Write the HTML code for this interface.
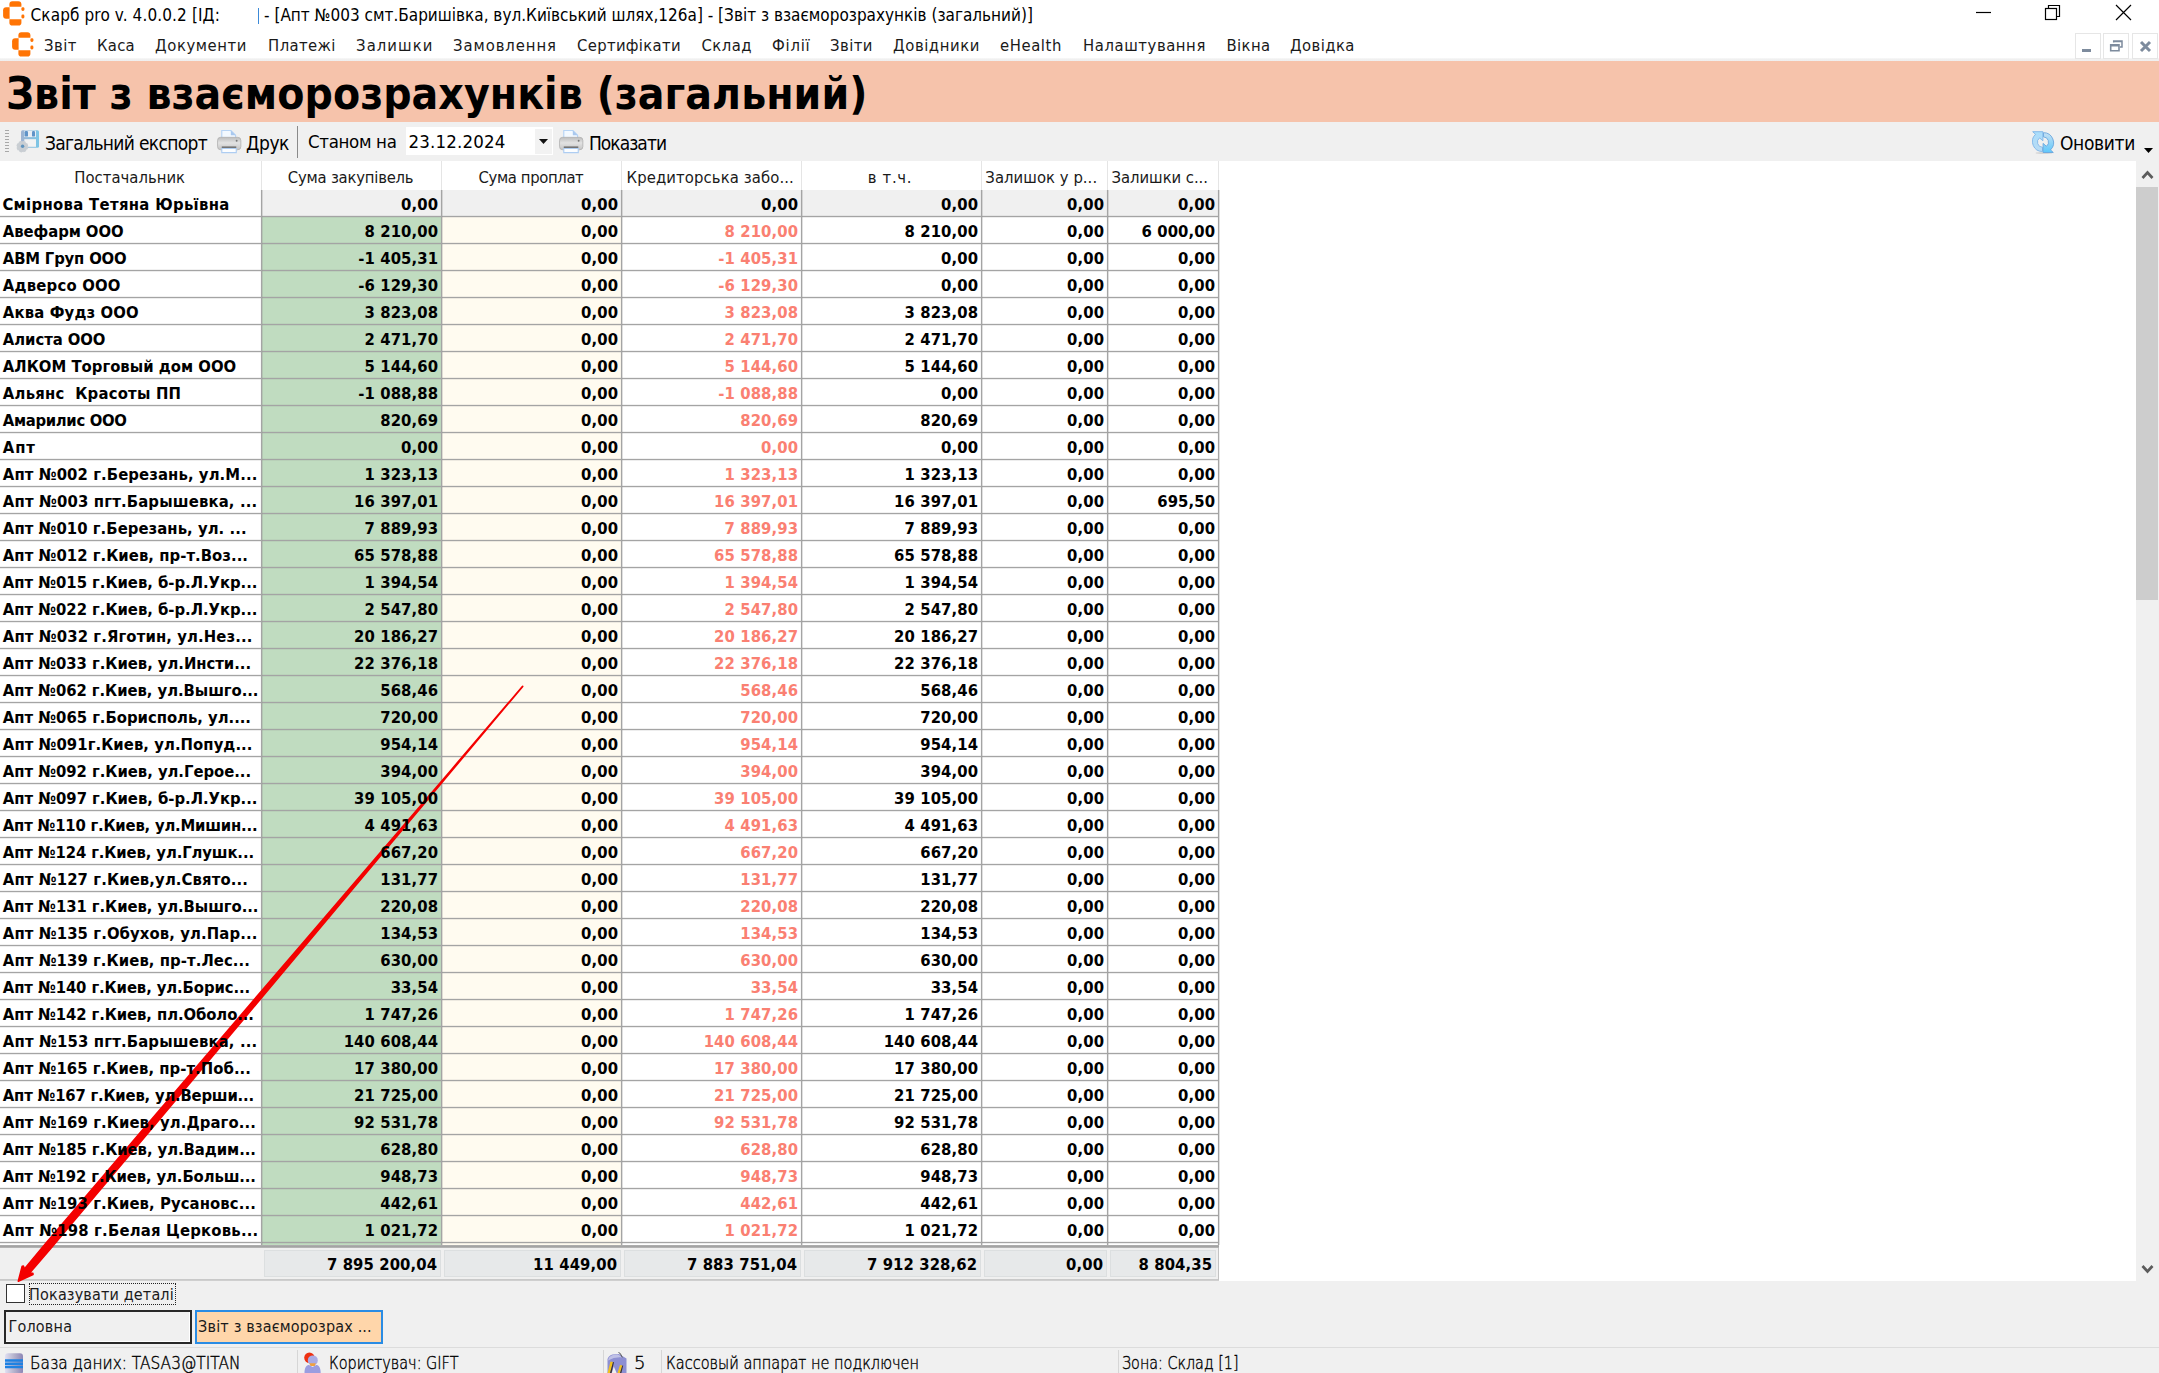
<!DOCTYPE html>
<html lang="uk"><head><meta charset="utf-8"><title>Скарб pro</title>
<style>
html,body{margin:0;padding:0}
body{width:2159px;height:1373px;overflow:hidden;background:#f0f0f0;position:relative;font-family:"DejaVu Sans Condensed","DejaVu Sans","Liberation Sans",sans-serif;}
.b{position:absolute;display:block}
.t{position:absolute;white-space:pre;line-height:normal;}
</style></head><body>
<div class="b" style="left:0px;top:0px;width:2159px;height:30px;background:#fff;"></div>
<div class="b" style="left:0px;top:30px;width:2159px;height:31px;background:#fff;"></div>
<svg class="b" style="left:3px;top:1px" width="23" height="25" viewBox="0 0 23 25"><g fill="#ff7404">
<path d="M6.400 5.700V3.300Q6.400 .300 9.400 .300h6q3 0 3 3v2.400z"/>
<path d="M6.400 18.200v3.500q0 2.800 3 2.800h6q3 0 3-2.800v-3.500z"/>
<path d="M6.600 6.200H3.100Q.100 6.200 .100 9.200v5.600q0 3 3 3h3.500z"/>
<rect x="18.400" y="6.200" width="3" height="3.700" rx="1.300"/><rect x="18.400" y="13.600" width="3" height="3.800" rx="1.300"/>
</g></svg>
<svg class="b" style="left:11.6px;top:32.4px" width="23" height="25" viewBox="0 0 23 25"><g fill="#ff7404">
<path d="M6.400 5.700V3.300Q6.400 .300 9.400 .300h6q3 0 3 3v2.400z"/>
<path d="M6.400 18.200v3.500q0 2.800 3 2.800h6q3 0 3-2.800v-3.500z"/>
<path d="M6.600 6.200H3.100Q.100 6.200 .100 9.200v5.600q0 3 3 3h3.500z"/>
<rect x="18.400" y="6.200" width="3" height="3.700" rx="1.300"/><rect x="18.400" y="13.600" width="3" height="3.800" rx="1.300"/>
</g></svg>
<div class="b" style="left:258px;top:8px;width:1px;height:16px;background:#3c8ad8;"></div>
<svg class="b" style="left:1960px;top:0" width="199" height="30" viewBox="0 0 199 30" fill="none" stroke="#000" stroke-width="1.2"><path d="M16 12.500h15"/><rect x="85.500" y="8.500" width="11" height="11"/><path d="M88.500 8.500v-3h11v11h-3"/><path d="M156 5l15 15M171 5l-15 15"/></svg>
<div class="b" style="left:0px;top:58px;width:2159px;height:3px;background:linear-gradient(#f9f9f9,#f0f0f0 45%,#efefef);"></div>
<div class="b" style="left:2075px;top:33px;width:26px;height:26px;background:#fff;border:1px solid #e6e6e6;box-sizing:border-box;"></div>
<div class="b" style="left:2103px;top:33px;width:26px;height:26px;background:#fff;border:1px solid #e6e6e6;box-sizing:border-box;"></div>
<div class="b" style="left:2132px;top:33px;width:26px;height:26px;background:#fff;border:1px solid #e6e6e6;box-sizing:border-box;"></div>
<svg class="b" style="left:2075px;top:33px" width="84" height="26" viewBox="0 0 84 26" fill="none" stroke="#7d8b9d"><path d="M7 17.500h9" stroke-width="3"/><path d="M35.700 11.800h8.300v6h-8.300zM35.200 12.800h8.800" stroke-width="1.600"/><path d="M38.700 9.500V8h8.300v6h-2M38.200 8.500h8.800" stroke-width="1.500"/><path d="M66 9l9 9M75 9l-9 9" stroke-width="3"/></svg>
<div class="b" style="left:0px;top:61px;width:2159px;height:61px;background:#f6c3ab;"></div>
<div class="b" style="left:0px;top:122px;width:2159px;height:39px;background:#f0f0f0;"></div>
<div class="b" style="left:5px;top:130px;width:4px;height:23px;background:repeating-linear-gradient(#a8a8a8 0 1px,transparent 1px 3px);"></div>
<div class="b" style="left:297px;top:126px;width:1px;height:32px;background:#8a8a8a;"></div>
<div class="b" style="left:406px;top:127px;width:147px;height:28px;background:#fff;"></div>
<div class="b" style="left:535px;top:129px;width:17px;height:25px;background:#f2f2f2;"></div>
<svg class="b" style="left:539px;top:139px" width="9" height="5"><path d="M0 0h9L4.500 5z" fill="#111"/></svg>
<svg class="b" style="left:2144px;top:148px" width="9" height="5"><path d="M0 0h9L4.500 5z" fill="#000"/></svg>
<svg class="b" style="left:16px;top:130px" width="24" height="24" viewBox="0 0 24 24">
<defs><linearGradient id="fl" x1="0" x2="1"><stop offset="0" stop-color="#9fb3d2"/><stop offset="1" stop-color="#7cc6e6"/></linearGradient></defs>
<rect x="5" y="0.300" width="18" height="17.500" rx="1.500" fill="url(#fl)"/>
<rect x="8.200" y="0.600" width="11.800" height="6.500" fill="#e9eef4"/>
<rect x="8.600" y="1" width="3.400" height="5.600" rx="1.200" fill="#5f93c8"/><rect x="16" y="1" width="3" height="5.600" rx="1.200" fill="#5f93c8"/>
<rect x="8.300" y="9.200" width="11.700" height="7.600" fill="#f3f3f3"/>
<circle cx="6.300" cy="16.600" r="5.300" fill="#c9ced3"/><circle cx="6.300" cy="16.600" r="4.200" fill="none" stroke="#c9ced3" stroke-width="3.400" stroke-dasharray="2.200 1.100"/><circle cx="6.600" cy="16.200" r="1.700" fill="#5f93be"/></svg>
<svg class="b" style="left:217px;top:129.7px" width="24.800" height="23.850" viewBox="0 0 26 25">
<defs><linearGradient id="pg1" x1="0" y1="0" x2="0" y2="1"><stop offset="0" stop-color="#bdbdbd"/><stop offset=".45" stop-color="#e2e2e2"/><stop offset="1" stop-color="#c4c4c4"/></linearGradient></defs>
<path d="M5 0.500h9.500l5 5v4H5z" fill="#f3f9ff" stroke="#b7d4f5" stroke-width="1.200"/><path d="M14.500 0.500v5h5z" fill="#a9c8ee"/>
<rect x="0.600" y="7.700" width="24.400" height="13" rx="3.200" fill="url(#pg1)" stroke="#b3b3b3" stroke-width="0.900"/>
<rect x="5" y="17.200" width="15.200" height="2.200" fill="#747474"/><circle cx="20.600" cy="11.300" r="1" fill="#777"/>
<path d="M5 19.400h15.200v4.300H5z" fill="#fbfdff" stroke="#aecdf2" stroke-width="1.200"/></svg>
<svg class="b" style="left:559px;top:129.7px" width="24.800" height="23.850" viewBox="0 0 26 25">
<defs><linearGradient id="pg2" x1="0" y1="0" x2="0" y2="1"><stop offset="0" stop-color="#bdbdbd"/><stop offset=".45" stop-color="#e2e2e2"/><stop offset="1" stop-color="#c4c4c4"/></linearGradient></defs>
<path d="M5 0.500h9.500l5 5v4H5z" fill="#f3f9ff" stroke="#b7d4f5" stroke-width="1.200"/><path d="M14.500 0.500v5h5z" fill="#a9c8ee"/>
<rect x="0.600" y="7.700" width="24.400" height="13" rx="3.200" fill="url(#pg2)" stroke="#b3b3b3" stroke-width="0.900"/>
<rect x="5" y="17.200" width="15.200" height="2.200" fill="#747474"/><circle cx="20.600" cy="11.300" r="1" fill="#777"/>
<path d="M5 19.400h15.200v4.300H5z" fill="#fbfdff" stroke="#aecdf2" stroke-width="1.200"/></svg>
<svg class="b" style="left:2032px;top:131px" width="23" height="23" viewBox="0 0 23 23">
<defs><linearGradient id="r1" x1="0" y1="0" x2="0" y2="1"><stop offset="0" stop-color="#a9ddfc"/><stop offset="1" stop-color="#b9dbf3"/></linearGradient>
<linearGradient id="r2" x1="0" y1="0" x2="0" y2="1"><stop offset="0" stop-color="#5fc8fb"/><stop offset="1" stop-color="#c6e0f3"/></linearGradient></defs>
<ellipse cx="12" cy="22" rx="8.500" ry="1" fill="#d4d4d4"/>
<path id="ra" d="M.700 .700H10.900V9.800L7.600 6.900A5.200 5.200 0 0 0 10.500 16.300V20.500A10 10 0 0 1 3.500 3.300Z" fill="url(#r1)" stroke="#7db4e8" stroke-width="0.900" stroke-linejoin="round"/>
<path d="M.700 .700H10.900V9.800L7.600 6.900A5.200 5.200 0 0 0 10.500 16.300V20.500A10 10 0 0 1 3.500 3.300Z" transform="rotate(180 11 11.100)" fill="url(#r2)" stroke="#6aa6de" stroke-width="0.900" stroke-linejoin="round"/></svg>
<div class="b" style="left:0px;top:161px;width:2136px;height:1120px;background:#fff;"></div>
<div class="b" style="left:261px;top:161px;width:1px;height:29px;background:#e5e5e5;"></div>
<div class="b" style="left:441px;top:161px;width:1px;height:29px;background:#e5e5e5;"></div>
<div class="b" style="left:621px;top:161px;width:1px;height:29px;background:#e5e5e5;"></div>
<div class="b" style="left:801px;top:161px;width:1px;height:29px;background:#e5e5e5;"></div>
<div class="b" style="left:981px;top:161px;width:1px;height:29px;background:#e5e5e5;"></div>
<div class="b" style="left:1107px;top:161px;width:1px;height:29px;background:#e5e5e5;"></div>
<div class="b" style="left:1218px;top:161px;width:1px;height:29px;background:#e5e5e5;"></div>
<div class="b" style="left:262px;top:190px;width:956px;height:26px;background:#f0f0f0;"></div>
<div class="b" style="left:262px;top:217px;width:179px;height:1028px;background:#c0dcc0;"></div>
<div class="b" style="left:442px;top:217px;width:179px;height:1028px;background:#fffbf0;"></div>
<div class="b" style="left:0px;top:216px;width:1219px;height:1px;background:#a4a4a4;box-shadow:0 1px 0 rgba(150,150,150,.17),0 -1px 0 rgba(150,150,150,.13);"></div>
<div class="b" style="left:0px;top:243px;width:1219px;height:1px;background:#a4a4a4;box-shadow:0 1px 0 rgba(150,150,150,.17),0 -1px 0 rgba(150,150,150,.13);"></div>
<div class="b" style="left:0px;top:270px;width:1219px;height:1px;background:#a4a4a4;box-shadow:0 1px 0 rgba(150,150,150,.17),0 -1px 0 rgba(150,150,150,.13);"></div>
<div class="b" style="left:0px;top:297px;width:1219px;height:1px;background:#a4a4a4;box-shadow:0 1px 0 rgba(150,150,150,.17),0 -1px 0 rgba(150,150,150,.13);"></div>
<div class="b" style="left:0px;top:324px;width:1219px;height:1px;background:#a4a4a4;box-shadow:0 1px 0 rgba(150,150,150,.17),0 -1px 0 rgba(150,150,150,.13);"></div>
<div class="b" style="left:0px;top:351px;width:1219px;height:1px;background:#a4a4a4;box-shadow:0 1px 0 rgba(150,150,150,.17),0 -1px 0 rgba(150,150,150,.13);"></div>
<div class="b" style="left:0px;top:378px;width:1219px;height:1px;background:#a4a4a4;box-shadow:0 1px 0 rgba(150,150,150,.17),0 -1px 0 rgba(150,150,150,.13);"></div>
<div class="b" style="left:0px;top:405px;width:1219px;height:1px;background:#a4a4a4;box-shadow:0 1px 0 rgba(150,150,150,.17),0 -1px 0 rgba(150,150,150,.13);"></div>
<div class="b" style="left:0px;top:432px;width:1219px;height:1px;background:#a4a4a4;box-shadow:0 1px 0 rgba(150,150,150,.17),0 -1px 0 rgba(150,150,150,.13);"></div>
<div class="b" style="left:0px;top:459px;width:1219px;height:1px;background:#a4a4a4;box-shadow:0 1px 0 rgba(150,150,150,.17),0 -1px 0 rgba(150,150,150,.13);"></div>
<div class="b" style="left:0px;top:486px;width:1219px;height:1px;background:#a4a4a4;box-shadow:0 1px 0 rgba(150,150,150,.17),0 -1px 0 rgba(150,150,150,.13);"></div>
<div class="b" style="left:0px;top:513px;width:1219px;height:1px;background:#a4a4a4;box-shadow:0 1px 0 rgba(150,150,150,.17),0 -1px 0 rgba(150,150,150,.13);"></div>
<div class="b" style="left:0px;top:540px;width:1219px;height:1px;background:#a4a4a4;box-shadow:0 1px 0 rgba(150,150,150,.17),0 -1px 0 rgba(150,150,150,.13);"></div>
<div class="b" style="left:0px;top:567px;width:1219px;height:1px;background:#a4a4a4;box-shadow:0 1px 0 rgba(150,150,150,.17),0 -1px 0 rgba(150,150,150,.13);"></div>
<div class="b" style="left:0px;top:594px;width:1219px;height:1px;background:#a4a4a4;box-shadow:0 1px 0 rgba(150,150,150,.17),0 -1px 0 rgba(150,150,150,.13);"></div>
<div class="b" style="left:0px;top:621px;width:1219px;height:1px;background:#a4a4a4;box-shadow:0 1px 0 rgba(150,150,150,.17),0 -1px 0 rgba(150,150,150,.13);"></div>
<div class="b" style="left:0px;top:648px;width:1219px;height:1px;background:#a4a4a4;box-shadow:0 1px 0 rgba(150,150,150,.17),0 -1px 0 rgba(150,150,150,.13);"></div>
<div class="b" style="left:0px;top:675px;width:1219px;height:1px;background:#a4a4a4;box-shadow:0 1px 0 rgba(150,150,150,.17),0 -1px 0 rgba(150,150,150,.13);"></div>
<div class="b" style="left:0px;top:702px;width:1219px;height:1px;background:#a4a4a4;box-shadow:0 1px 0 rgba(150,150,150,.17),0 -1px 0 rgba(150,150,150,.13);"></div>
<div class="b" style="left:0px;top:729px;width:1219px;height:1px;background:#a4a4a4;box-shadow:0 1px 0 rgba(150,150,150,.17),0 -1px 0 rgba(150,150,150,.13);"></div>
<div class="b" style="left:0px;top:756px;width:1219px;height:1px;background:#a4a4a4;box-shadow:0 1px 0 rgba(150,150,150,.17),0 -1px 0 rgba(150,150,150,.13);"></div>
<div class="b" style="left:0px;top:783px;width:1219px;height:1px;background:#a4a4a4;box-shadow:0 1px 0 rgba(150,150,150,.17),0 -1px 0 rgba(150,150,150,.13);"></div>
<div class="b" style="left:0px;top:810px;width:1219px;height:1px;background:#a4a4a4;box-shadow:0 1px 0 rgba(150,150,150,.17),0 -1px 0 rgba(150,150,150,.13);"></div>
<div class="b" style="left:0px;top:837px;width:1219px;height:1px;background:#a4a4a4;box-shadow:0 1px 0 rgba(150,150,150,.17),0 -1px 0 rgba(150,150,150,.13);"></div>
<div class="b" style="left:0px;top:864px;width:1219px;height:1px;background:#a4a4a4;box-shadow:0 1px 0 rgba(150,150,150,.17),0 -1px 0 rgba(150,150,150,.13);"></div>
<div class="b" style="left:0px;top:891px;width:1219px;height:1px;background:#a4a4a4;box-shadow:0 1px 0 rgba(150,150,150,.17),0 -1px 0 rgba(150,150,150,.13);"></div>
<div class="b" style="left:0px;top:918px;width:1219px;height:1px;background:#a4a4a4;box-shadow:0 1px 0 rgba(150,150,150,.17),0 -1px 0 rgba(150,150,150,.13);"></div>
<div class="b" style="left:0px;top:945px;width:1219px;height:1px;background:#a4a4a4;box-shadow:0 1px 0 rgba(150,150,150,.17),0 -1px 0 rgba(150,150,150,.13);"></div>
<div class="b" style="left:0px;top:972px;width:1219px;height:1px;background:#a4a4a4;box-shadow:0 1px 0 rgba(150,150,150,.17),0 -1px 0 rgba(150,150,150,.13);"></div>
<div class="b" style="left:0px;top:999px;width:1219px;height:1px;background:#a4a4a4;box-shadow:0 1px 0 rgba(150,150,150,.17),0 -1px 0 rgba(150,150,150,.13);"></div>
<div class="b" style="left:0px;top:1026px;width:1219px;height:1px;background:#a4a4a4;box-shadow:0 1px 0 rgba(150,150,150,.17),0 -1px 0 rgba(150,150,150,.13);"></div>
<div class="b" style="left:0px;top:1053px;width:1219px;height:1px;background:#a4a4a4;box-shadow:0 1px 0 rgba(150,150,150,.17),0 -1px 0 rgba(150,150,150,.13);"></div>
<div class="b" style="left:0px;top:1080px;width:1219px;height:1px;background:#a4a4a4;box-shadow:0 1px 0 rgba(150,150,150,.17),0 -1px 0 rgba(150,150,150,.13);"></div>
<div class="b" style="left:0px;top:1107px;width:1219px;height:1px;background:#a4a4a4;box-shadow:0 1px 0 rgba(150,150,150,.17),0 -1px 0 rgba(150,150,150,.13);"></div>
<div class="b" style="left:0px;top:1134px;width:1219px;height:1px;background:#a4a4a4;box-shadow:0 1px 0 rgba(150,150,150,.17),0 -1px 0 rgba(150,150,150,.13);"></div>
<div class="b" style="left:0px;top:1161px;width:1219px;height:1px;background:#a4a4a4;box-shadow:0 1px 0 rgba(150,150,150,.17),0 -1px 0 rgba(150,150,150,.13);"></div>
<div class="b" style="left:0px;top:1188px;width:1219px;height:1px;background:#a4a4a4;box-shadow:0 1px 0 rgba(150,150,150,.17),0 -1px 0 rgba(150,150,150,.13);"></div>
<div class="b" style="left:0px;top:1215px;width:1219px;height:1px;background:#a4a4a4;box-shadow:0 1px 0 rgba(150,150,150,.17),0 -1px 0 rgba(150,150,150,.13);"></div>
<div class="b" style="left:0px;top:1242px;width:1219px;height:1px;background:#a4a4a4;box-shadow:0 1px 0 rgba(150,150,150,.17),0 -1px 0 rgba(150,150,150,.13);"></div>
<div class="b" style="left:261px;top:190px;width:1px;height:1055px;background:#a4a4a4;box-shadow:1px 0 0 rgba(150,150,150,.3),-1px 0 0 rgba(150,150,150,.07);"></div>
<div class="b" style="left:441px;top:190px;width:1px;height:1055px;background:#a4a4a4;box-shadow:1px 0 0 rgba(150,150,150,.3),-1px 0 0 rgba(150,150,150,.07);"></div>
<div class="b" style="left:621px;top:190px;width:1px;height:1055px;background:#a4a4a4;box-shadow:1px 0 0 rgba(150,150,150,.3),-1px 0 0 rgba(150,150,150,.07);"></div>
<div class="b" style="left:801px;top:190px;width:1px;height:1055px;background:#a4a4a4;box-shadow:1px 0 0 rgba(150,150,150,.3),-1px 0 0 rgba(150,150,150,.07);"></div>
<div class="b" style="left:981px;top:190px;width:1px;height:1055px;background:#a4a4a4;box-shadow:1px 0 0 rgba(150,150,150,.3),-1px 0 0 rgba(150,150,150,.07);"></div>
<div class="b" style="left:1107px;top:190px;width:1px;height:1055px;background:#a4a4a4;box-shadow:1px 0 0 rgba(150,150,150,.3),-1px 0 0 rgba(150,150,150,.07);"></div>
<div class="b" style="left:1218px;top:190px;width:1px;height:1055px;background:#a4a4a4;box-shadow:1px 0 0 rgba(150,150,150,.3),-1px 0 0 rgba(150,150,150,.07);"></div>
<div class="b" style="left:0px;top:1245px;width:1219px;height:3px;background:linear-gradient(#b4b4b4,#a2a2a2 40%,#a8a8a8 75%,#c9c9c9);"></div>
<div class="b" style="left:0px;top:1248px;width:1219px;height:33px;background:#f0f0f0;"></div>
<div class="b" style="left:0px;top:1279px;width:1219px;height:2px;background:linear-gradient(#c6c6c6,#d2d2d2);"></div>
<div class="b" style="left:1218px;top:1248px;width:1px;height:32px;background:#c2c2c2;"></div>
<div class="b" style="left:264px;top:1250px;width:177px;height:27px;background:#e7e9ea;border:1px solid #dcdfe0;box-sizing:border-box;"></div>
<div class="b" style="left:444px;top:1250px;width:177px;height:27px;background:#e7e9ea;border:1px solid #dcdfe0;box-sizing:border-box;"></div>
<div class="b" style="left:624px;top:1250px;width:177px;height:27px;background:#e7e9ea;border:1px solid #dcdfe0;box-sizing:border-box;"></div>
<div class="b" style="left:804px;top:1250px;width:177px;height:27px;background:#e7e9ea;border:1px solid #dcdfe0;box-sizing:border-box;"></div>
<div class="b" style="left:984px;top:1250px;width:123px;height:27px;background:#e7e9ea;border:1px solid #dcdfe0;box-sizing:border-box;"></div>
<div class="b" style="left:1110px;top:1250px;width:106px;height:27px;background:#e7e9ea;border:1px solid #dcdfe0;box-sizing:border-box;"></div>
<div class="b" style="left:2136px;top:161px;width:23px;height:1120px;background:#f0f0f0;"></div>
<div class="b" style="left:2136px;top:187px;width:22px;height:413px;background:#cdcdcd;"></div>
<svg class="b" style="left:2141px;top:168px" width="13" height="12" fill="none" stroke="#5c5c5c" stroke-width="2.700"><path d="M1.500 10l5-5.500 5 5.500"/></svg>
<svg class="b" style="left:2141px;top:1263.800px" width="13" height="12" fill="none" stroke="#5c5c5c" stroke-width="2.700"><path d="M1.500 2l5 5.500 5-5.500"/></svg>
<div class="b" style="left:6px;top:1284px;width:19px;height:19px;background:#fff;border:1px solid #333;box-sizing:border-box;"></div>
<div class="b" style="left:29px;top:1283px;width:147px;height:22px;border:1px dotted #222;box-sizing:border-box;"></div>
<div class="b" style="left:4px;top:1309.5px;width:188px;height:34.5px;background:#f0f0f0;border:2px solid #282828;box-shadow:inset -1px -1px 0 #fff;box-sizing:border-box;"></div>
<div class="b" style="left:195px;top:1309.5px;width:188px;height:34.5px;background:#ffd6aa;border:2px solid #2a8ce4;box-sizing:border-box;"></div>
<div class="b" style="left:0px;top:1347px;width:2159px;height:1px;background:#dcdcdc;"></div>
<div class="b" style="left:297px;top:1350px;width:1px;height:23px;background:#d6d6d6;"></div>
<div class="b" style="left:603px;top:1350px;width:1px;height:23px;background:#d6d6d6;"></div>
<div class="b" style="left:661px;top:1350px;width:1px;height:23px;background:#d6d6d6;"></div>
<div class="b" style="left:1118px;top:1350px;width:1px;height:23px;background:#d6d6d6;"></div>
<svg class="b" style="left:4.500px;top:1353px" width="18" height="20" viewBox="0 0 18 20">
<defs><linearGradient id="dbg" x1="0" x2="1"><stop offset="0" stop-color="#e0dff2"/><stop offset=".5" stop-color="#b5b3cc"/><stop offset="1" stop-color="#8d86b6"/></linearGradient></defs>
<rect x="0" y="0.300" width="18" height="21" rx="3" fill="url(#dbg)"/>
<path d="M0 6.300h18v2.400H0zM0 9.600h18v2.300H0zM0 12.800h18v2.400H0z" fill="#1f82e2"/></svg>
<svg class="b" style="left:303px;top:1352px" width="18" height="21" viewBox="0 0 18 21">
<circle cx="6.400" cy="5.700" r="5.200" fill="#ee3010"/><circle cx="9.800" cy="8.400" r="5" fill="#a9abe4"/><path d="M6.400 11.300h6.400l-1 2.600h-4.400z" fill="#f0a040"/>
<path d="M1.500 21c0-5.500 2-8 4.500-8l3.600 2 3.600-2c2.500 0 4.500 2.500 4.500 8z" fill="#9b9de0"/></svg>
<svg class="b" style="left:606px;top:1352px" width="22" height="21" viewBox="0 0 22 21">
<path d="M1.500 7Q3 2.500 9 2.300l4-.3 7.500 4.500V21h-19z" fill="#8d8fd2"/><path d="M3 5.500Q6 2 12 2.500l5 3Q9 4.500 2 8.500z" fill="#bfc0e6"/>
<path d="M12.500 .500l1.800 1 2 4" stroke="#555" stroke-width="1" fill="none"/>
<path d="M5.800 21l2-6.500L10.600 21z" fill="#f0f0f0"/><path d="M4.500 9.500l2.500 .5L4 21H1.500zM14 13l2.300 .4L14 21h-2.500z" fill="#f2c11c"/><path d="M7 10l1 .3L5.500 21H4zM16.300 13.400l.9 .2L15.400 21H14z" fill="#3a3030"/></svg>
<svg class="b" style="left:0;top:0" width="2159" height="1373"><polygon points="18.3,1281.2 22.2,1266.2 23.4,1266.0 24.4,1269.0 44.8,1244.6 140.1,1132.8 301.5,944.4 451.2,769.9 522.6,686.3 522.7,686.4 452.0,770.5 304.3,946.8 144.9,1136.8 50.1,1249.2 29.5,1273.2 32.9,1273.2 33.0,1274.4" fill="#f40000" stroke="#f40000" stroke-width="1.6" stroke-linejoin="round"/></svg>
<span class="t" style="top:5px;font-size:17px;letter-spacing:0.115px;left:30.565px;">Скарб pro v. 4.0.0.2 [ІД:</span>
<span class="t" style="top:5px;font-size:17px;letter-spacing:-0.001px;left:264.065px;">- [Апт №003 смт.Баришівка, вул.Київський шлях,126а] - [Звіт з взаєморозрахунків (загальний)]</span>
<span class="t" style="top:36px;font-size:16.5px;color:#1a1a1a;letter-spacing:0.442px;left:44.0925px;">Звіт</span>
<span class="t" style="top:36px;font-size:16.5px;color:#1a1a1a;letter-spacing:0.227px;left:97.0925px;">Каса</span>
<span class="t" style="top:36px;font-size:16.5px;color:#1a1a1a;letter-spacing:0.561px;left:155.0925px;">Документи</span>
<span class="t" style="top:36px;font-size:16.5px;color:#1a1a1a;letter-spacing:0.395px;left:268.0925px;">Платежі</span>
<span class="t" style="top:36px;font-size:16.5px;color:#1a1a1a;letter-spacing:1.052px;left:356.0925px;">Залишки</span>
<span class="t" style="top:36px;font-size:16.5px;color:#1a1a1a;letter-spacing:0.921px;left:453.0925px;">Замовлення</span>
<span class="t" style="top:36px;font-size:16.5px;color:#1a1a1a;letter-spacing:0.311px;left:577.0925px;">Сертифікати</span>
<span class="t" style="top:36px;font-size:16.5px;color:#1a1a1a;letter-spacing:0.425px;left:701.5925px;">Склад</span>
<span class="t" style="top:36px;font-size:16.5px;color:#1a1a1a;letter-spacing:0.732px;left:772.0925px;">Філії</span>
<span class="t" style="top:36px;font-size:16.5px;color:#1a1a1a;letter-spacing:0.425px;left:830.0925px;">Звіти</span>
<span class="t" style="top:36px;font-size:16.5px;color:#1a1a1a;letter-spacing:0.558px;left:893.0925px;">Довідники</span>
<span class="t" style="top:36px;font-size:16.5px;color:#1a1a1a;letter-spacing:0.561px;left:1000.0925px;">eHealth</span>
<span class="t" style="top:36px;font-size:16.5px;color:#1a1a1a;letter-spacing:0.563px;left:1083.0925px;">Налаштування</span>
<span class="t" style="top:36px;font-size:16.5px;color:#1a1a1a;letter-spacing:0.344px;left:1226.5925px;">Вікна</span>
<span class="t" style="top:36px;font-size:16.5px;color:#1a1a1a;letter-spacing:0.418px;left:1290.0925px;">Довідка</span>
<span class="t" style="top:68px;font-size:44px;font-weight:bold;letter-spacing:0.049px;left:5.880000000000001px;">Звіт з взаєморозрахунків (загальний)</span>
<span class="t" style="top:132px;font-size:19px;letter-spacing:-0.666px;left:44.955px;">Загальний експорт</span>
<span class="t" style="top:132px;font-size:19px;letter-spacing:-0.392px;left:245.955px;">Друк</span>
<span class="t" style="top:131px;font-size:18.5px;letter-spacing:-0.331px;left:307.9825px;">Станом на</span>
<span class="t" style="top:131px;font-size:18.5px;letter-spacing:0.177px;left:408.4825px;">23.12.2024</span>
<span class="t" style="top:132px;font-size:19px;letter-spacing:-0.957px;left:588.955px;">Показати</span>
<span class="t" style="top:132px;font-size:19px;letter-spacing:-0.320px;left:2059.955px;">Оновити</span>
<span class="t" style="top:168px;font-size:16.5px;color:#1a1a1a;letter-spacing:0.020px;left:74.2925px;">Постачальник</span>
<span class="t" style="top:168px;font-size:16.5px;color:#1a1a1a;letter-spacing:-0.220px;left:287.8425px;">Сума закупівель</span>
<span class="t" style="top:168px;font-size:16.5px;color:#1a1a1a;letter-spacing:-0.375px;left:478.5925px;">Сума проплат</span>
<span class="t" style="top:168px;font-size:16.5px;color:#1a1a1a;letter-spacing:0.105px;left:626.5925px;">Кредиторська забо...</span>
<span class="t" style="top:168px;font-size:16.5px;color:#1a1a1a;letter-spacing:0.667px;left:867.8425px;">в т.ч.</span>
<span class="t" style="top:168px;font-size:16.5px;color:#1a1a1a;letter-spacing:0.047px;left:985.3425px;">Залишок у р...</span>
<span class="t" style="top:168px;font-size:16.5px;color:#1a1a1a;letter-spacing:-0.054px;left:1111.5925px;">Залишки с...</span>
<span class="t" style="top:195px;font-size:16.5px;font-weight:bold;letter-spacing:0.329px;left:2.4px;">Смірнова Тетяна Юрьївна</span>
<span class="t" style="top:195px;font-size:16.5px;font-weight:bold;letter-spacing:0.100px;right:1720.90px;">0,00</span>
<span class="t" style="top:195px;font-size:16.5px;font-weight:bold;letter-spacing:0.100px;right:1540.90px;">0,00</span>
<span class="t" style="top:195px;font-size:16.5px;font-weight:bold;letter-spacing:0.100px;right:1360.90px;">0,00</span>
<span class="t" style="top:195px;font-size:16.5px;font-weight:bold;letter-spacing:0.100px;right:1180.90px;">0,00</span>
<span class="t" style="top:195px;font-size:16.5px;font-weight:bold;letter-spacing:0.100px;right:1054.90px;">0,00</span>
<span class="t" style="top:195px;font-size:16.5px;font-weight:bold;letter-spacing:0.100px;right:943.90px;">0,00</span>
<span class="t" style="top:222px;font-size:16.5px;font-weight:bold;letter-spacing:-0.076px;left:2.85px;">Авефарм ООО</span>
<span class="t" style="top:222px;font-size:16.5px;font-weight:bold;letter-spacing:0.100px;right:1720.90px;">8 210,00</span>
<span class="t" style="top:222px;font-size:16.5px;font-weight:bold;letter-spacing:0.100px;right:1540.90px;">0,00</span>
<span class="t" style="top:222px;font-size:16.5px;font-weight:bold;color:#fa8072;letter-spacing:0.100px;right:1360.90px;">8 210,00</span>
<span class="t" style="top:222px;font-size:16.5px;font-weight:bold;letter-spacing:0.100px;right:1180.90px;">8 210,00</span>
<span class="t" style="top:222px;font-size:16.5px;font-weight:bold;letter-spacing:0.100px;right:1054.90px;">0,00</span>
<span class="t" style="top:222px;font-size:16.5px;font-weight:bold;letter-spacing:0.100px;right:943.90px;">6 000,00</span>
<span class="t" style="top:249px;font-size:16.5px;font-weight:bold;letter-spacing:-0.178px;left:2.85px;">АВМ Груп ООО</span>
<span class="t" style="top:249px;font-size:16.5px;font-weight:bold;letter-spacing:0.100px;right:1720.90px;">-1 405,31</span>
<span class="t" style="top:249px;font-size:16.5px;font-weight:bold;letter-spacing:0.100px;right:1540.90px;">0,00</span>
<span class="t" style="top:249px;font-size:16.5px;font-weight:bold;color:#fa8072;letter-spacing:0.100px;right:1360.90px;">-1 405,31</span>
<span class="t" style="top:249px;font-size:16.5px;font-weight:bold;letter-spacing:0.100px;right:1180.90px;">0,00</span>
<span class="t" style="top:249px;font-size:16.5px;font-weight:bold;letter-spacing:0.100px;right:1054.90px;">0,00</span>
<span class="t" style="top:249px;font-size:16.5px;font-weight:bold;letter-spacing:0.100px;right:943.90px;">0,00</span>
<span class="t" style="top:276px;font-size:16.5px;font-weight:bold;letter-spacing:0.196px;left:2.85px;">Адверсо ООО</span>
<span class="t" style="top:276px;font-size:16.5px;font-weight:bold;letter-spacing:0.100px;right:1720.90px;">-6 129,30</span>
<span class="t" style="top:276px;font-size:16.5px;font-weight:bold;letter-spacing:0.100px;right:1540.90px;">0,00</span>
<span class="t" style="top:276px;font-size:16.5px;font-weight:bold;color:#fa8072;letter-spacing:0.100px;right:1360.90px;">-6 129,30</span>
<span class="t" style="top:276px;font-size:16.5px;font-weight:bold;letter-spacing:0.100px;right:1180.90px;">0,00</span>
<span class="t" style="top:276px;font-size:16.5px;font-weight:bold;letter-spacing:0.100px;right:1054.90px;">0,00</span>
<span class="t" style="top:276px;font-size:16.5px;font-weight:bold;letter-spacing:0.100px;right:943.90px;">0,00</span>
<span class="t" style="top:303px;font-size:16.5px;font-weight:bold;letter-spacing:0.144px;left:2.85px;">Аква Фудз ООО</span>
<span class="t" style="top:303px;font-size:16.5px;font-weight:bold;letter-spacing:0.100px;right:1720.90px;">3 823,08</span>
<span class="t" style="top:303px;font-size:16.5px;font-weight:bold;letter-spacing:0.100px;right:1540.90px;">0,00</span>
<span class="t" style="top:303px;font-size:16.5px;font-weight:bold;color:#fa8072;letter-spacing:0.100px;right:1360.90px;">3 823,08</span>
<span class="t" style="top:303px;font-size:16.5px;font-weight:bold;letter-spacing:0.100px;right:1180.90px;">3 823,08</span>
<span class="t" style="top:303px;font-size:16.5px;font-weight:bold;letter-spacing:0.100px;right:1054.90px;">0,00</span>
<span class="t" style="top:303px;font-size:16.5px;font-weight:bold;letter-spacing:0.100px;right:943.90px;">0,00</span>
<span class="t" style="top:330px;font-size:16.5px;font-weight:bold;letter-spacing:-0.065px;left:2.85px;">Алиста ООО</span>
<span class="t" style="top:330px;font-size:16.5px;font-weight:bold;letter-spacing:0.100px;right:1720.90px;">2 471,70</span>
<span class="t" style="top:330px;font-size:16.5px;font-weight:bold;letter-spacing:0.100px;right:1540.90px;">0,00</span>
<span class="t" style="top:330px;font-size:16.5px;font-weight:bold;color:#fa8072;letter-spacing:0.100px;right:1360.90px;">2 471,70</span>
<span class="t" style="top:330px;font-size:16.5px;font-weight:bold;letter-spacing:0.100px;right:1180.90px;">2 471,70</span>
<span class="t" style="top:330px;font-size:16.5px;font-weight:bold;letter-spacing:0.100px;right:1054.90px;">0,00</span>
<span class="t" style="top:330px;font-size:16.5px;font-weight:bold;letter-spacing:0.100px;right:943.90px;">0,00</span>
<span class="t" style="top:357px;font-size:16.5px;font-weight:bold;letter-spacing:0.010px;left:2.85px;">АЛКОМ Торговый дом ООО</span>
<span class="t" style="top:357px;font-size:16.5px;font-weight:bold;letter-spacing:0.100px;right:1720.90px;">5 144,60</span>
<span class="t" style="top:357px;font-size:16.5px;font-weight:bold;letter-spacing:0.100px;right:1540.90px;">0,00</span>
<span class="t" style="top:357px;font-size:16.5px;font-weight:bold;color:#fa8072;letter-spacing:0.100px;right:1360.90px;">5 144,60</span>
<span class="t" style="top:357px;font-size:16.5px;font-weight:bold;letter-spacing:0.100px;right:1180.90px;">5 144,60</span>
<span class="t" style="top:357px;font-size:16.5px;font-weight:bold;letter-spacing:0.100px;right:1054.90px;">0,00</span>
<span class="t" style="top:357px;font-size:16.5px;font-weight:bold;letter-spacing:0.100px;right:943.90px;">0,00</span>
<span class="t" style="top:384px;font-size:16.5px;font-weight:bold;letter-spacing:0.215px;left:2.85px;">Альянс  Красоты ПП</span>
<span class="t" style="top:384px;font-size:16.5px;font-weight:bold;letter-spacing:0.100px;right:1720.90px;">-1 088,88</span>
<span class="t" style="top:384px;font-size:16.5px;font-weight:bold;letter-spacing:0.100px;right:1540.90px;">0,00</span>
<span class="t" style="top:384px;font-size:16.5px;font-weight:bold;color:#fa8072;letter-spacing:0.100px;right:1360.90px;">-1 088,88</span>
<span class="t" style="top:384px;font-size:16.5px;font-weight:bold;letter-spacing:0.100px;right:1180.90px;">0,00</span>
<span class="t" style="top:384px;font-size:16.5px;font-weight:bold;letter-spacing:0.100px;right:1054.90px;">0,00</span>
<span class="t" style="top:384px;font-size:16.5px;font-weight:bold;letter-spacing:0.100px;right:943.90px;">0,00</span>
<span class="t" style="top:411px;font-size:16.5px;font-weight:bold;letter-spacing:-0.343px;left:2.85px;">Амарилис ООО</span>
<span class="t" style="top:411px;font-size:16.5px;font-weight:bold;letter-spacing:0.100px;right:1720.90px;">820,69</span>
<span class="t" style="top:411px;font-size:16.5px;font-weight:bold;letter-spacing:0.100px;right:1540.90px;">0,00</span>
<span class="t" style="top:411px;font-size:16.5px;font-weight:bold;color:#fa8072;letter-spacing:0.100px;right:1360.90px;">820,69</span>
<span class="t" style="top:411px;font-size:16.5px;font-weight:bold;letter-spacing:0.100px;right:1180.90px;">820,69</span>
<span class="t" style="top:411px;font-size:16.5px;font-weight:bold;letter-spacing:0.100px;right:1054.90px;">0,00</span>
<span class="t" style="top:411px;font-size:16.5px;font-weight:bold;letter-spacing:0.100px;right:943.90px;">0,00</span>
<span class="t" style="top:438px;font-size:16.5px;font-weight:bold;letter-spacing:0.797px;left:2.85px;">Апт</span>
<span class="t" style="top:438px;font-size:16.5px;font-weight:bold;letter-spacing:0.100px;right:1720.90px;">0,00</span>
<span class="t" style="top:438px;font-size:16.5px;font-weight:bold;letter-spacing:0.100px;right:1540.90px;">0,00</span>
<span class="t" style="top:438px;font-size:16.5px;font-weight:bold;color:#fa8072;letter-spacing:0.100px;right:1360.90px;">0,00</span>
<span class="t" style="top:438px;font-size:16.5px;font-weight:bold;letter-spacing:0.100px;right:1180.90px;">0,00</span>
<span class="t" style="top:438px;font-size:16.5px;font-weight:bold;letter-spacing:0.100px;right:1054.90px;">0,00</span>
<span class="t" style="top:438px;font-size:16.5px;font-weight:bold;letter-spacing:0.100px;right:943.90px;">0,00</span>
<span class="t" style="top:465px;font-size:16.5px;font-weight:bold;letter-spacing:0.092px;left:2.85px;">Апт №002 г.Березань, ул.М...</span>
<span class="t" style="top:465px;font-size:16.5px;font-weight:bold;letter-spacing:0.100px;right:1720.90px;">1 323,13</span>
<span class="t" style="top:465px;font-size:16.5px;font-weight:bold;letter-spacing:0.100px;right:1540.90px;">0,00</span>
<span class="t" style="top:465px;font-size:16.5px;font-weight:bold;color:#fa8072;letter-spacing:0.100px;right:1360.90px;">1 323,13</span>
<span class="t" style="top:465px;font-size:16.5px;font-weight:bold;letter-spacing:0.100px;right:1180.90px;">1 323,13</span>
<span class="t" style="top:465px;font-size:16.5px;font-weight:bold;letter-spacing:0.100px;right:1054.90px;">0,00</span>
<span class="t" style="top:465px;font-size:16.5px;font-weight:bold;letter-spacing:0.100px;right:943.90px;">0,00</span>
<span class="t" style="top:492px;font-size:16.5px;font-weight:bold;letter-spacing:0.160px;left:2.85px;">Апт №003 пгт.Барышевка, ...</span>
<span class="t" style="top:492px;font-size:16.5px;font-weight:bold;letter-spacing:0.100px;right:1720.90px;">16 397,01</span>
<span class="t" style="top:492px;font-size:16.5px;font-weight:bold;letter-spacing:0.100px;right:1540.90px;">0,00</span>
<span class="t" style="top:492px;font-size:16.5px;font-weight:bold;color:#fa8072;letter-spacing:0.100px;right:1360.90px;">16 397,01</span>
<span class="t" style="top:492px;font-size:16.5px;font-weight:bold;letter-spacing:0.100px;right:1180.90px;">16 397,01</span>
<span class="t" style="top:492px;font-size:16.5px;font-weight:bold;letter-spacing:0.100px;right:1054.90px;">0,00</span>
<span class="t" style="top:492px;font-size:16.5px;font-weight:bold;letter-spacing:0.100px;right:943.90px;">695,50</span>
<span class="t" style="top:519px;font-size:16.5px;font-weight:bold;letter-spacing:0.049px;left:2.85px;">Апт №010 г.Березань, ул. ...</span>
<span class="t" style="top:519px;font-size:16.5px;font-weight:bold;letter-spacing:0.100px;right:1720.90px;">7 889,93</span>
<span class="t" style="top:519px;font-size:16.5px;font-weight:bold;letter-spacing:0.100px;right:1540.90px;">0,00</span>
<span class="t" style="top:519px;font-size:16.5px;font-weight:bold;color:#fa8072;letter-spacing:0.100px;right:1360.90px;">7 889,93</span>
<span class="t" style="top:519px;font-size:16.5px;font-weight:bold;letter-spacing:0.100px;right:1180.90px;">7 889,93</span>
<span class="t" style="top:519px;font-size:16.5px;font-weight:bold;letter-spacing:0.100px;right:1054.90px;">0,00</span>
<span class="t" style="top:519px;font-size:16.5px;font-weight:bold;letter-spacing:0.100px;right:943.90px;">0,00</span>
<span class="t" style="top:546px;font-size:16.5px;font-weight:bold;letter-spacing:0.038px;left:2.85px;">Апт №012 г.Киев, пр-т.Воз...</span>
<span class="t" style="top:546px;font-size:16.5px;font-weight:bold;letter-spacing:0.100px;right:1720.90px;">65 578,88</span>
<span class="t" style="top:546px;font-size:16.5px;font-weight:bold;letter-spacing:0.100px;right:1540.90px;">0,00</span>
<span class="t" style="top:546px;font-size:16.5px;font-weight:bold;color:#fa8072;letter-spacing:0.100px;right:1360.90px;">65 578,88</span>
<span class="t" style="top:546px;font-size:16.5px;font-weight:bold;letter-spacing:0.100px;right:1180.90px;">65 578,88</span>
<span class="t" style="top:546px;font-size:16.5px;font-weight:bold;letter-spacing:0.100px;right:1054.90px;">0,00</span>
<span class="t" style="top:546px;font-size:16.5px;font-weight:bold;letter-spacing:0.100px;right:943.90px;">0,00</span>
<span class="t" style="top:573px;font-size:16.5px;font-weight:bold;letter-spacing:-0.035px;left:2.85px;">Апт №015 г.Киев, б-р.Л.Укр...</span>
<span class="t" style="top:573px;font-size:16.5px;font-weight:bold;letter-spacing:0.100px;right:1720.90px;">1 394,54</span>
<span class="t" style="top:573px;font-size:16.5px;font-weight:bold;letter-spacing:0.100px;right:1540.90px;">0,00</span>
<span class="t" style="top:573px;font-size:16.5px;font-weight:bold;color:#fa8072;letter-spacing:0.100px;right:1360.90px;">1 394,54</span>
<span class="t" style="top:573px;font-size:16.5px;font-weight:bold;letter-spacing:0.100px;right:1180.90px;">1 394,54</span>
<span class="t" style="top:573px;font-size:16.5px;font-weight:bold;letter-spacing:0.100px;right:1054.90px;">0,00</span>
<span class="t" style="top:573px;font-size:16.5px;font-weight:bold;letter-spacing:0.100px;right:943.90px;">0,00</span>
<span class="t" style="top:600px;font-size:16.5px;font-weight:bold;letter-spacing:-0.035px;left:2.85px;">Апт №022 г.Киев, б-р.Л.Укр...</span>
<span class="t" style="top:600px;font-size:16.5px;font-weight:bold;letter-spacing:0.100px;right:1720.90px;">2 547,80</span>
<span class="t" style="top:600px;font-size:16.5px;font-weight:bold;letter-spacing:0.100px;right:1540.90px;">0,00</span>
<span class="t" style="top:600px;font-size:16.5px;font-weight:bold;color:#fa8072;letter-spacing:0.100px;right:1360.90px;">2 547,80</span>
<span class="t" style="top:600px;font-size:16.5px;font-weight:bold;letter-spacing:0.100px;right:1180.90px;">2 547,80</span>
<span class="t" style="top:600px;font-size:16.5px;font-weight:bold;letter-spacing:0.100px;right:1054.90px;">0,00</span>
<span class="t" style="top:600px;font-size:16.5px;font-weight:bold;letter-spacing:0.100px;right:943.90px;">0,00</span>
<span class="t" style="top:627px;font-size:16.5px;font-weight:bold;letter-spacing:0.108px;left:2.85px;">Апт №032 г.Яготин, ул.Нез...</span>
<span class="t" style="top:627px;font-size:16.5px;font-weight:bold;letter-spacing:0.100px;right:1720.90px;">20 186,27</span>
<span class="t" style="top:627px;font-size:16.5px;font-weight:bold;letter-spacing:0.100px;right:1540.90px;">0,00</span>
<span class="t" style="top:627px;font-size:16.5px;font-weight:bold;color:#fa8072;letter-spacing:0.100px;right:1360.90px;">20 186,27</span>
<span class="t" style="top:627px;font-size:16.5px;font-weight:bold;letter-spacing:0.100px;right:1180.90px;">20 186,27</span>
<span class="t" style="top:627px;font-size:16.5px;font-weight:bold;letter-spacing:0.100px;right:1054.90px;">0,00</span>
<span class="t" style="top:627px;font-size:16.5px;font-weight:bold;letter-spacing:0.100px;right:943.90px;">0,00</span>
<span class="t" style="top:654px;font-size:16.5px;font-weight:bold;letter-spacing:-0.042px;left:2.85px;">Апт №033 г.Киев, ул.Инсти...</span>
<span class="t" style="top:654px;font-size:16.5px;font-weight:bold;letter-spacing:0.100px;right:1720.90px;">22 376,18</span>
<span class="t" style="top:654px;font-size:16.5px;font-weight:bold;letter-spacing:0.100px;right:1540.90px;">0,00</span>
<span class="t" style="top:654px;font-size:16.5px;font-weight:bold;color:#fa8072;letter-spacing:0.100px;right:1360.90px;">22 376,18</span>
<span class="t" style="top:654px;font-size:16.5px;font-weight:bold;letter-spacing:0.100px;right:1180.90px;">22 376,18</span>
<span class="t" style="top:654px;font-size:16.5px;font-weight:bold;letter-spacing:0.100px;right:1054.90px;">0,00</span>
<span class="t" style="top:654px;font-size:16.5px;font-weight:bold;letter-spacing:0.100px;right:943.90px;">0,00</span>
<span class="t" style="top:681px;font-size:16.5px;font-weight:bold;letter-spacing:-0.062px;left:2.85px;">Апт №062 г.Киев, ул.Вышго...</span>
<span class="t" style="top:681px;font-size:16.5px;font-weight:bold;letter-spacing:0.100px;right:1720.90px;">568,46</span>
<span class="t" style="top:681px;font-size:16.5px;font-weight:bold;letter-spacing:0.100px;right:1540.90px;">0,00</span>
<span class="t" style="top:681px;font-size:16.5px;font-weight:bold;color:#fa8072;letter-spacing:0.100px;right:1360.90px;">568,46</span>
<span class="t" style="top:681px;font-size:16.5px;font-weight:bold;letter-spacing:0.100px;right:1180.90px;">568,46</span>
<span class="t" style="top:681px;font-size:16.5px;font-weight:bold;letter-spacing:0.100px;right:1054.90px;">0,00</span>
<span class="t" style="top:681px;font-size:16.5px;font-weight:bold;letter-spacing:0.100px;right:943.90px;">0,00</span>
<span class="t" style="top:708px;font-size:16.5px;font-weight:bold;letter-spacing:-0.027px;left:2.85px;">Апт №065 г.Борисполь, ул....</span>
<span class="t" style="top:708px;font-size:16.5px;font-weight:bold;letter-spacing:0.100px;right:1720.90px;">720,00</span>
<span class="t" style="top:708px;font-size:16.5px;font-weight:bold;letter-spacing:0.100px;right:1540.90px;">0,00</span>
<span class="t" style="top:708px;font-size:16.5px;font-weight:bold;color:#fa8072;letter-spacing:0.100px;right:1360.90px;">720,00</span>
<span class="t" style="top:708px;font-size:16.5px;font-weight:bold;letter-spacing:0.100px;right:1180.90px;">720,00</span>
<span class="t" style="top:708px;font-size:16.5px;font-weight:bold;letter-spacing:0.100px;right:1054.90px;">0,00</span>
<span class="t" style="top:708px;font-size:16.5px;font-weight:bold;letter-spacing:0.100px;right:943.90px;">0,00</span>
<span class="t" style="top:735px;font-size:16.5px;font-weight:bold;letter-spacing:0.053px;left:2.85px;">Апт №091г.Киев, ул.Попуд...</span>
<span class="t" style="top:735px;font-size:16.5px;font-weight:bold;letter-spacing:0.100px;right:1720.90px;">954,14</span>
<span class="t" style="top:735px;font-size:16.5px;font-weight:bold;letter-spacing:0.100px;right:1540.90px;">0,00</span>
<span class="t" style="top:735px;font-size:16.5px;font-weight:bold;color:#fa8072;letter-spacing:0.100px;right:1360.90px;">954,14</span>
<span class="t" style="top:735px;font-size:16.5px;font-weight:bold;letter-spacing:0.100px;right:1180.90px;">954,14</span>
<span class="t" style="top:735px;font-size:16.5px;font-weight:bold;letter-spacing:0.100px;right:1054.90px;">0,00</span>
<span class="t" style="top:735px;font-size:16.5px;font-weight:bold;letter-spacing:0.100px;right:943.90px;">0,00</span>
<span class="t" style="top:762px;font-size:16.5px;font-weight:bold;letter-spacing:-0.040px;left:2.85px;">Апт №092 г.Киев, ул.Герое...</span>
<span class="t" style="top:762px;font-size:16.5px;font-weight:bold;letter-spacing:0.100px;right:1720.90px;">394,00</span>
<span class="t" style="top:762px;font-size:16.5px;font-weight:bold;letter-spacing:0.100px;right:1540.90px;">0,00</span>
<span class="t" style="top:762px;font-size:16.5px;font-weight:bold;color:#fa8072;letter-spacing:0.100px;right:1360.90px;">394,00</span>
<span class="t" style="top:762px;font-size:16.5px;font-weight:bold;letter-spacing:0.100px;right:1180.90px;">394,00</span>
<span class="t" style="top:762px;font-size:16.5px;font-weight:bold;letter-spacing:0.100px;right:1054.90px;">0,00</span>
<span class="t" style="top:762px;font-size:16.5px;font-weight:bold;letter-spacing:0.100px;right:943.90px;">0,00</span>
<span class="t" style="top:789px;font-size:16.5px;font-weight:bold;letter-spacing:-0.035px;left:2.85px;">Апт №097 г.Киев, б-р.Л.Укр...</span>
<span class="t" style="top:789px;font-size:16.5px;font-weight:bold;letter-spacing:0.100px;right:1720.90px;">39 105,00</span>
<span class="t" style="top:789px;font-size:16.5px;font-weight:bold;letter-spacing:0.100px;right:1540.90px;">0,00</span>
<span class="t" style="top:789px;font-size:16.5px;font-weight:bold;color:#fa8072;letter-spacing:0.100px;right:1360.90px;">39 105,00</span>
<span class="t" style="top:789px;font-size:16.5px;font-weight:bold;letter-spacing:0.100px;right:1180.90px;">39 105,00</span>
<span class="t" style="top:789px;font-size:16.5px;font-weight:bold;letter-spacing:0.100px;right:1054.90px;">0,00</span>
<span class="t" style="top:789px;font-size:16.5px;font-weight:bold;letter-spacing:0.100px;right:943.90px;">0,00</span>
<span class="t" style="top:816px;font-size:16.5px;font-weight:bold;letter-spacing:-0.211px;left:2.85px;">Апт №110 г.Киев, ул.Мишин...</span>
<span class="t" style="top:816px;font-size:16.5px;font-weight:bold;letter-spacing:0.100px;right:1720.90px;">4 491,63</span>
<span class="t" style="top:816px;font-size:16.5px;font-weight:bold;letter-spacing:0.100px;right:1540.90px;">0,00</span>
<span class="t" style="top:816px;font-size:16.5px;font-weight:bold;color:#fa8072;letter-spacing:0.100px;right:1360.90px;">4 491,63</span>
<span class="t" style="top:816px;font-size:16.5px;font-weight:bold;letter-spacing:0.100px;right:1180.90px;">4 491,63</span>
<span class="t" style="top:816px;font-size:16.5px;font-weight:bold;letter-spacing:0.100px;right:1054.90px;">0,00</span>
<span class="t" style="top:816px;font-size:16.5px;font-weight:bold;letter-spacing:0.100px;right:943.90px;">0,00</span>
<span class="t" style="top:843px;font-size:16.5px;font-weight:bold;letter-spacing:-0.130px;left:2.85px;">Апт №124 г.Киев, ул.Глушк...</span>
<span class="t" style="top:843px;font-size:16.5px;font-weight:bold;letter-spacing:0.100px;right:1720.90px;">667,20</span>
<span class="t" style="top:843px;font-size:16.5px;font-weight:bold;letter-spacing:0.100px;right:1540.90px;">0,00</span>
<span class="t" style="top:843px;font-size:16.5px;font-weight:bold;color:#fa8072;letter-spacing:0.100px;right:1360.90px;">667,20</span>
<span class="t" style="top:843px;font-size:16.5px;font-weight:bold;letter-spacing:0.100px;right:1180.90px;">667,20</span>
<span class="t" style="top:843px;font-size:16.5px;font-weight:bold;letter-spacing:0.100px;right:1054.90px;">0,00</span>
<span class="t" style="top:843px;font-size:16.5px;font-weight:bold;letter-spacing:0.100px;right:943.90px;">0,00</span>
<span class="t" style="top:870px;font-size:16.5px;font-weight:bold;letter-spacing:0.106px;left:2.85px;">Апт №127 г.Киев,ул.Свято...</span>
<span class="t" style="top:870px;font-size:16.5px;font-weight:bold;letter-spacing:0.100px;right:1720.90px;">131,77</span>
<span class="t" style="top:870px;font-size:16.5px;font-weight:bold;letter-spacing:0.100px;right:1540.90px;">0,00</span>
<span class="t" style="top:870px;font-size:16.5px;font-weight:bold;color:#fa8072;letter-spacing:0.100px;right:1360.90px;">131,77</span>
<span class="t" style="top:870px;font-size:16.5px;font-weight:bold;letter-spacing:0.100px;right:1180.90px;">131,77</span>
<span class="t" style="top:870px;font-size:16.5px;font-weight:bold;letter-spacing:0.100px;right:1054.90px;">0,00</span>
<span class="t" style="top:870px;font-size:16.5px;font-weight:bold;letter-spacing:0.100px;right:943.90px;">0,00</span>
<span class="t" style="top:897px;font-size:16.5px;font-weight:bold;letter-spacing:-0.062px;left:2.85px;">Апт №131 г.Киев, ул.Вышго...</span>
<span class="t" style="top:897px;font-size:16.5px;font-weight:bold;letter-spacing:0.100px;right:1720.90px;">220,08</span>
<span class="t" style="top:897px;font-size:16.5px;font-weight:bold;letter-spacing:0.100px;right:1540.90px;">0,00</span>
<span class="t" style="top:897px;font-size:16.5px;font-weight:bold;color:#fa8072;letter-spacing:0.100px;right:1360.90px;">220,08</span>
<span class="t" style="top:897px;font-size:16.5px;font-weight:bold;letter-spacing:0.100px;right:1180.90px;">220,08</span>
<span class="t" style="top:897px;font-size:16.5px;font-weight:bold;letter-spacing:0.100px;right:1054.90px;">0,00</span>
<span class="t" style="top:897px;font-size:16.5px;font-weight:bold;letter-spacing:0.100px;right:943.90px;">0,00</span>
<span class="t" style="top:924px;font-size:16.5px;font-weight:bold;letter-spacing:0.101px;left:2.85px;">Апт №135 г.Обухов, ул.Пар...</span>
<span class="t" style="top:924px;font-size:16.5px;font-weight:bold;letter-spacing:0.100px;right:1720.90px;">134,53</span>
<span class="t" style="top:924px;font-size:16.5px;font-weight:bold;letter-spacing:0.100px;right:1540.90px;">0,00</span>
<span class="t" style="top:924px;font-size:16.5px;font-weight:bold;color:#fa8072;letter-spacing:0.100px;right:1360.90px;">134,53</span>
<span class="t" style="top:924px;font-size:16.5px;font-weight:bold;letter-spacing:0.100px;right:1180.90px;">134,53</span>
<span class="t" style="top:924px;font-size:16.5px;font-weight:bold;letter-spacing:0.100px;right:1054.90px;">0,00</span>
<span class="t" style="top:924px;font-size:16.5px;font-weight:bold;letter-spacing:0.100px;right:943.90px;">0,00</span>
<span class="t" style="top:951px;font-size:16.5px;font-weight:bold;letter-spacing:0.072px;left:2.85px;">Апт №139 г.Киев, пр-т.Лес...</span>
<span class="t" style="top:951px;font-size:16.5px;font-weight:bold;letter-spacing:0.100px;right:1720.90px;">630,00</span>
<span class="t" style="top:951px;font-size:16.5px;font-weight:bold;letter-spacing:0.100px;right:1540.90px;">0,00</span>
<span class="t" style="top:951px;font-size:16.5px;font-weight:bold;color:#fa8072;letter-spacing:0.100px;right:1360.90px;">630,00</span>
<span class="t" style="top:951px;font-size:16.5px;font-weight:bold;letter-spacing:0.100px;right:1180.90px;">630,00</span>
<span class="t" style="top:951px;font-size:16.5px;font-weight:bold;letter-spacing:0.100px;right:1054.90px;">0,00</span>
<span class="t" style="top:951px;font-size:16.5px;font-weight:bold;letter-spacing:0.100px;right:943.90px;">0,00</span>
<span class="t" style="top:978px;font-size:16.5px;font-weight:bold;letter-spacing:-0.108px;left:2.85px;">Апт №140 г.Киев, ул.Борис...</span>
<span class="t" style="top:978px;font-size:16.5px;font-weight:bold;letter-spacing:0.100px;right:1720.90px;">33,54</span>
<span class="t" style="top:978px;font-size:16.5px;font-weight:bold;letter-spacing:0.100px;right:1540.90px;">0,00</span>
<span class="t" style="top:978px;font-size:16.5px;font-weight:bold;color:#fa8072;letter-spacing:0.100px;right:1360.90px;">33,54</span>
<span class="t" style="top:978px;font-size:16.5px;font-weight:bold;letter-spacing:0.100px;right:1180.90px;">33,54</span>
<span class="t" style="top:978px;font-size:16.5px;font-weight:bold;letter-spacing:0.100px;right:1054.90px;">0,00</span>
<span class="t" style="top:978px;font-size:16.5px;font-weight:bold;letter-spacing:0.100px;right:943.90px;">0,00</span>
<span class="t" style="top:1005px;font-size:16.5px;font-weight:bold;letter-spacing:-0.094px;left:2.85px;">Апт №142 г.Киев, пл.Оболо...</span>
<span class="t" style="top:1005px;font-size:16.5px;font-weight:bold;letter-spacing:0.100px;right:1720.90px;">1 747,26</span>
<span class="t" style="top:1005px;font-size:16.5px;font-weight:bold;letter-spacing:0.100px;right:1540.90px;">0,00</span>
<span class="t" style="top:1005px;font-size:16.5px;font-weight:bold;color:#fa8072;letter-spacing:0.100px;right:1360.90px;">1 747,26</span>
<span class="t" style="top:1005px;font-size:16.5px;font-weight:bold;letter-spacing:0.100px;right:1180.90px;">1 747,26</span>
<span class="t" style="top:1005px;font-size:16.5px;font-weight:bold;letter-spacing:0.100px;right:1054.90px;">0,00</span>
<span class="t" style="top:1005px;font-size:16.5px;font-weight:bold;letter-spacing:0.100px;right:943.90px;">0,00</span>
<span class="t" style="top:1032px;font-size:16.5px;font-weight:bold;letter-spacing:0.160px;left:2.85px;">Апт №153 пгт.Барышевка, ...</span>
<span class="t" style="top:1032px;font-size:16.5px;font-weight:bold;letter-spacing:0.100px;right:1720.90px;">140 608,44</span>
<span class="t" style="top:1032px;font-size:16.5px;font-weight:bold;letter-spacing:0.100px;right:1540.90px;">0,00</span>
<span class="t" style="top:1032px;font-size:16.5px;font-weight:bold;color:#fa8072;letter-spacing:0.100px;right:1360.90px;">140 608,44</span>
<span class="t" style="top:1032px;font-size:16.5px;font-weight:bold;letter-spacing:0.100px;right:1180.90px;">140 608,44</span>
<span class="t" style="top:1032px;font-size:16.5px;font-weight:bold;letter-spacing:0.100px;right:1054.90px;">0,00</span>
<span class="t" style="top:1032px;font-size:16.5px;font-weight:bold;letter-spacing:0.100px;right:943.90px;">0,00</span>
<span class="t" style="top:1059px;font-size:16.5px;font-weight:bold;letter-spacing:0.043px;left:2.85px;">Апт №165 г.Киев, пр-т.Поб...</span>
<span class="t" style="top:1059px;font-size:16.5px;font-weight:bold;letter-spacing:0.100px;right:1720.90px;">17 380,00</span>
<span class="t" style="top:1059px;font-size:16.5px;font-weight:bold;letter-spacing:0.100px;right:1540.90px;">0,00</span>
<span class="t" style="top:1059px;font-size:16.5px;font-weight:bold;color:#fa8072;letter-spacing:0.100px;right:1360.90px;">17 380,00</span>
<span class="t" style="top:1059px;font-size:16.5px;font-weight:bold;letter-spacing:0.100px;right:1180.90px;">17 380,00</span>
<span class="t" style="top:1059px;font-size:16.5px;font-weight:bold;letter-spacing:0.100px;right:1054.90px;">0,00</span>
<span class="t" style="top:1059px;font-size:16.5px;font-weight:bold;letter-spacing:0.100px;right:943.90px;">0,00</span>
<span class="t" style="top:1086px;font-size:16.5px;font-weight:bold;letter-spacing:-0.213px;left:2.85px;">Апт №167 г.Киев, ул.Верши...</span>
<span class="t" style="top:1086px;font-size:16.5px;font-weight:bold;letter-spacing:0.100px;right:1720.90px;">21 725,00</span>
<span class="t" style="top:1086px;font-size:16.5px;font-weight:bold;letter-spacing:0.100px;right:1540.90px;">0,00</span>
<span class="t" style="top:1086px;font-size:16.5px;font-weight:bold;color:#fa8072;letter-spacing:0.100px;right:1360.90px;">21 725,00</span>
<span class="t" style="top:1086px;font-size:16.5px;font-weight:bold;letter-spacing:0.100px;right:1180.90px;">21 725,00</span>
<span class="t" style="top:1086px;font-size:16.5px;font-weight:bold;letter-spacing:0.100px;right:1054.90px;">0,00</span>
<span class="t" style="top:1086px;font-size:16.5px;font-weight:bold;letter-spacing:0.100px;right:943.90px;">0,00</span>
<span class="t" style="top:1113px;font-size:16.5px;font-weight:bold;letter-spacing:0.085px;left:2.85px;">Апт №169 г.Киев, ул.Драго...</span>
<span class="t" style="top:1113px;font-size:16.5px;font-weight:bold;letter-spacing:0.100px;right:1720.90px;">92 531,78</span>
<span class="t" style="top:1113px;font-size:16.5px;font-weight:bold;letter-spacing:0.100px;right:1540.90px;">0,00</span>
<span class="t" style="top:1113px;font-size:16.5px;font-weight:bold;color:#fa8072;letter-spacing:0.100px;right:1360.90px;">92 531,78</span>
<span class="t" style="top:1113px;font-size:16.5px;font-weight:bold;letter-spacing:0.100px;right:1180.90px;">92 531,78</span>
<span class="t" style="top:1113px;font-size:16.5px;font-weight:bold;letter-spacing:0.100px;right:1054.90px;">0,00</span>
<span class="t" style="top:1113px;font-size:16.5px;font-weight:bold;letter-spacing:0.100px;right:943.90px;">0,00</span>
<span class="t" style="top:1140px;font-size:16.5px;font-weight:bold;letter-spacing:-0.058px;left:2.85px;">Апт №185 г.Киев, ул.Вадим...</span>
<span class="t" style="top:1140px;font-size:16.5px;font-weight:bold;letter-spacing:0.100px;right:1720.90px;">628,80</span>
<span class="t" style="top:1140px;font-size:16.5px;font-weight:bold;letter-spacing:0.100px;right:1540.90px;">0,00</span>
<span class="t" style="top:1140px;font-size:16.5px;font-weight:bold;color:#fa8072;letter-spacing:0.100px;right:1360.90px;">628,80</span>
<span class="t" style="top:1140px;font-size:16.5px;font-weight:bold;letter-spacing:0.100px;right:1180.90px;">628,80</span>
<span class="t" style="top:1140px;font-size:16.5px;font-weight:bold;letter-spacing:0.100px;right:1054.90px;">0,00</span>
<span class="t" style="top:1140px;font-size:16.5px;font-weight:bold;letter-spacing:0.100px;right:943.90px;">0,00</span>
<span class="t" style="top:1167px;font-size:16.5px;font-weight:bold;letter-spacing:-0.119px;left:2.85px;">Апт №192 г.Киев, ул.Больш...</span>
<span class="t" style="top:1167px;font-size:16.5px;font-weight:bold;letter-spacing:0.100px;right:1720.90px;">948,73</span>
<span class="t" style="top:1167px;font-size:16.5px;font-weight:bold;letter-spacing:0.100px;right:1540.90px;">0,00</span>
<span class="t" style="top:1167px;font-size:16.5px;font-weight:bold;color:#fa8072;letter-spacing:0.100px;right:1360.90px;">948,73</span>
<span class="t" style="top:1167px;font-size:16.5px;font-weight:bold;letter-spacing:0.100px;right:1180.90px;">948,73</span>
<span class="t" style="top:1167px;font-size:16.5px;font-weight:bold;letter-spacing:0.100px;right:1054.90px;">0,00</span>
<span class="t" style="top:1167px;font-size:16.5px;font-weight:bold;letter-spacing:0.100px;right:943.90px;">0,00</span>
<span class="t" style="top:1194px;font-size:16.5px;font-weight:bold;letter-spacing:0.085px;left:2.85px;">Апт №193 г.Киев, Русановс...</span>
<span class="t" style="top:1194px;font-size:16.5px;font-weight:bold;letter-spacing:0.100px;right:1720.90px;">442,61</span>
<span class="t" style="top:1194px;font-size:16.5px;font-weight:bold;letter-spacing:0.100px;right:1540.90px;">0,00</span>
<span class="t" style="top:1194px;font-size:16.5px;font-weight:bold;color:#fa8072;letter-spacing:0.100px;right:1360.90px;">442,61</span>
<span class="t" style="top:1194px;font-size:16.5px;font-weight:bold;letter-spacing:0.100px;right:1180.90px;">442,61</span>
<span class="t" style="top:1194px;font-size:16.5px;font-weight:bold;letter-spacing:0.100px;right:1054.90px;">0,00</span>
<span class="t" style="top:1194px;font-size:16.5px;font-weight:bold;letter-spacing:0.100px;right:943.90px;">0,00</span>
<span class="t" style="top:1221px;font-size:16.5px;font-weight:bold;letter-spacing:0.192px;left:2.85px;">Апт №198 г.Белая Церковь...</span>
<span class="t" style="top:1221px;font-size:16.5px;font-weight:bold;letter-spacing:0.100px;right:1720.90px;">1 021,72</span>
<span class="t" style="top:1221px;font-size:16.5px;font-weight:bold;letter-spacing:0.100px;right:1540.90px;">0,00</span>
<span class="t" style="top:1221px;font-size:16.5px;font-weight:bold;color:#fa8072;letter-spacing:0.100px;right:1360.90px;">1 021,72</span>
<span class="t" style="top:1221px;font-size:16.5px;font-weight:bold;letter-spacing:0.100px;right:1180.90px;">1 021,72</span>
<span class="t" style="top:1221px;font-size:16.5px;font-weight:bold;letter-spacing:0.100px;right:1054.90px;">0,00</span>
<span class="t" style="top:1221px;font-size:16.5px;font-weight:bold;letter-spacing:0.100px;right:943.90px;">0,00</span>
<span class="t" style="top:1255px;font-size:16.5px;font-weight:bold;letter-spacing:0.100px;right:1721.90px;">7 895 200,04</span>
<span class="t" style="top:1255px;font-size:16.5px;font-weight:bold;letter-spacing:0.100px;right:1541.90px;">11 449,00</span>
<span class="t" style="top:1255px;font-size:16.5px;font-weight:bold;letter-spacing:0.100px;right:1361.90px;">7 883 751,04</span>
<span class="t" style="top:1255px;font-size:16.5px;font-weight:bold;letter-spacing:0.100px;right:1181.90px;">7 912 328,62</span>
<span class="t" style="top:1255px;font-size:16.5px;font-weight:bold;letter-spacing:0.100px;right:1055.90px;">0,00</span>
<span class="t" style="top:1255px;font-size:16.5px;font-weight:bold;letter-spacing:0.100px;right:946.90px;">8 804,35</span>
<span class="t" style="top:1285px;font-size:16px;color:#1a1a1a;letter-spacing:0.153px;left:29.12px;">Показувати деталі</span>
<span class="t" style="top:1317px;font-size:16px;color:#1a1a1a;letter-spacing:0.207px;left:8.42px;">Головна</span>
<span class="t" style="top:1317px;font-size:16px;color:#1a1a1a;letter-spacing:0.173px;left:198.12px;">Звіт з взаєморозрах ...</span>
<span class="t" style="top:1352px;font-size:18px;font-family:'DejaVu Sans Light',sans-serif;-webkit-text-stroke:0.4px #000;transform:scaleX(0.8547);transform-origin:0 0;left:29.51px;">База даних: TASA3@TITAN</span>
<span class="t" style="top:1352px;font-size:18px;font-family:'DejaVu Sans Light',sans-serif;-webkit-text-stroke:0.4px #000;transform:scaleX(0.8035);transform-origin:0 0;left:328.71px;">Користувач: GIFT</span>
<span class="t" style="top:1352px;font-size:18px;font-family:'DejaVu Sans Light',sans-serif;-webkit-text-stroke:0.4px #000;transform:scaleX(1.0023);transform-origin:0 0;left:634.01px;">5</span>
<span class="t" style="top:1352px;font-size:18px;font-family:'DejaVu Sans Light',sans-serif;-webkit-text-stroke:0.4px #000;transform:scaleX(0.8073);transform-origin:0 0;left:666.21px;">Кассовый аппарат не подключен</span>
<span class="t" style="top:1352px;font-size:18px;font-family:'DejaVu Sans Light',sans-serif;-webkit-text-stroke:0.4px #000;transform:scaleX(0.7964);transform-origin:0 0;left:1122.41px;">Зона: Склад [1]</span>
</body></html>
